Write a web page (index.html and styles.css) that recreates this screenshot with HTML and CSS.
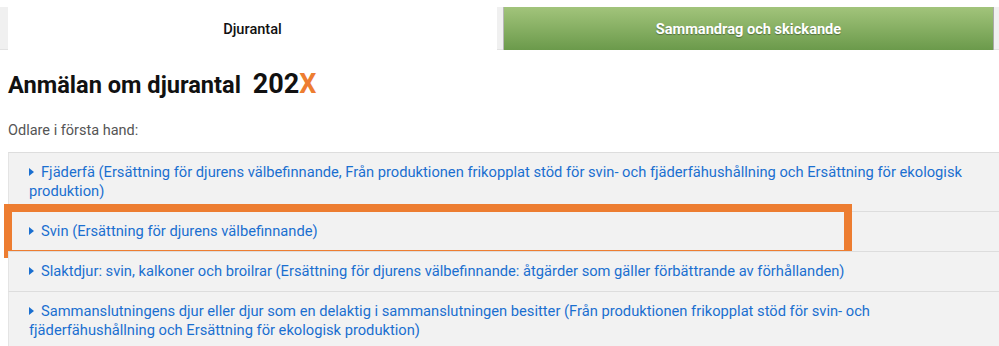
FILE: index.html
```html
<!DOCTYPE html>
<html lang="sv">
<head>
<meta charset="utf-8">
<title>Anmälan om djurantal</title>
<link rel="stylesheet" href="styles.css">
</head>
<body>
<nav class="tabs">
  <div class="tab tab-active">Djurantal</div>
  <div class="tab tab-green">Sammandrag och skickande</div>
</nav>
<main class="content">
  <h1 class="title"><span>Anmälan om djurantal</span> <span class="year">202<span class="year-x">X</span></span></h1>
  <p class="lead">Odlare i första hand:</p>
  <div class="accordion">
    <div class="item"><span class="caret"></span>Fjäderfä (Ersättning för djurens välbefinnande, Från produktionen frikopplat stöd för svin- och fjäderfähushållning och Ersättning för ekologisk produktion)</div>
    <div class="item item-marked"><span class="caret"></span>Svin (Ersättning för djurens välbefinnande)<span class="highlight"></span></div>
    <div class="item"><span class="caret"></span>Slaktdjur: svin, kalkoner och broilrar (Ersättning för djurens välbefinnande: åtgärder som gäller förbättrande av förhållanden)</div>
    <div class="item"><span class="caret"></span>Sammanslutningens djur eller djur som en delaktig i sammanslutningen besitter (Från produktionen frikopplat stöd för svin- och fjäderfähushållning och Ersättning för ekologisk produktion)</div>
  </div>
</main>
</body>
</html>
```
FILE: styles.css
```css
html, body {
  margin: 0;
  padding: 0;
  background: #ffffff;
  font-family: Roboto, "Liberation Sans", Arial, sans-serif;
  overflow: hidden;
}

.tabs {
  margin-top: 7px;
  height: 43px;
  background: #f0f0f0;
  border-bottom: 1px solid #e2e2e2;
  box-sizing: border-box;
  display: flex;
  padding-left: 8px;
  padding-right: 5px;
  gap: 6px;
}

.tab {
  flex: 1 1 0;
  display: flex;
  align-items: center;
  justify-content: center;
  font-size: 14.6px;
  font-weight: 500;
}

.tab-active {
  background: #ffffff;
  color: #111111;
  height: 43px;
}

.tab-green {
  background: linear-gradient(#a2c47b, #6b9a4b);
  color: #ffffff;
  font-weight: 700;
  text-shadow: 0 1px 1px rgba(0, 0, 0, 0.35);
  border-left: 1px solid #b8b8b8;
  border-right: 1px solid #a9a9a9;
  height: 43px;
  box-sizing: border-box;
}

.content {
  padding-left: 8px;
}

.title {
  margin: 19px 0 0 0;
  font-size: 23.6px;
  line-height: 30px;
  font-weight: 700;
  color: #111111;
}

.year {
  font-size: 27px;
  line-height: 30px;
  margin-left: 6px;
}

.year-x {
  color: #ed7d31;
}

.lead {
  margin: 21px 0 11px 0;
  font-size: 14.5px;
  line-height: 20px;
  color: #555555;
}

.accordion {
  border-bottom: 1px solid #dddddd;
}

.item {
  position: relative;
  background: #f2f2f2;
  border-top: 1px solid #dddddd;
  border-left: 1px solid #e4e4e4;
  padding: 10px 20px 10px 20px;
  font-size: 14.7px;
  line-height: 19px;
  color: #1a6fd0;
}

.caret {
  display: inline-block;
  width: 0;
  height: 0;
  border-top: 4px solid transparent;
  border-bottom: 4px solid transparent;
  border-left: 5px solid #1a6fd0;
  margin-right: 7px;
  vertical-align: 1px;
}

.highlight {
  position: absolute;
  left: -5px;
  top: -8px;
  width: 848px;
  height: 54px;
  border: 8px solid #ed7d31;
  box-sizing: border-box;
  pointer-events: none;
}
```
